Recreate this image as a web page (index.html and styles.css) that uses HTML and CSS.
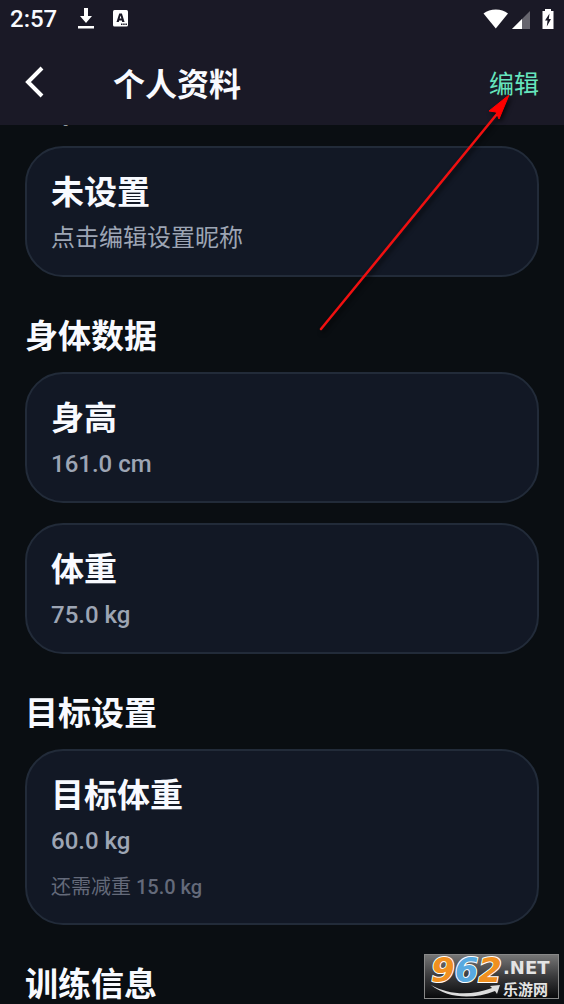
FILE: index.html
```html
<!DOCTYPE html>
<html lang="zh-CN">
<head>
<meta charset="utf-8">
<meta name="viewport" content="width=device-width, initial-scale=1">
<title>个人资料</title>
<link rel="stylesheet" href="styles.css">
</head>
<body>
<div class="app">
  <header class="top">
    <div class="status">
      <time class="clock">2:57</time>
      <svg class="download" width="18" height="24" viewBox="0 0 18 24" aria-hidden="true"><path d="M7 1h4v8h4l-6 7-6-7h4zM1 19h16v2.500H1z" fill="#fff"/></svg>
      <svg width="16" height="18" viewBox="0 0 16 18" aria-hidden="true"><rect x="0" y="0" width="15" height="16.500" rx="1.500" fill="#fff"/><path d="M3.500 12 6.200 3.500h2.700l2.700 8.500H9.200l-.4-1.500H6.200L5.800 12zM6.700 8.500h1.700L7.500 5.500z" fill="#1a1926" fill-rule="evenodd"/><path d="M8 14.300h6" stroke="#1a1926" stroke-width="1.500" stroke-dasharray="1.500 .7"/></svg>
      <div class="signals">
        <svg width="26" height="20" viewBox="0 0 26 20" aria-hidden="true"><path d="M.5 4.500C4 1.800 8 .5 12.800.5S21.500 1.800 25 4.500L12.800 19.500z" fill="#fff"/></svg>
        <svg class="cell" width="18" height="18" viewBox="0 0 18 18" aria-hidden="true"><path d="M0 18 18 0v18z" fill="#66656e"/><path d="M0 18 10 8v10z" fill="#fff"/></svg>
        <svg class="battery" width="12" height="22" viewBox="0 0 12 22" aria-hidden="true"><path d="M3 1h6v2h2.500v18H.5V3H3z" fill="#fff"/><path d="M7.500 5.500 3 12.500h2.500L4.800 18.500 9 11H6.800z" fill="#1a1926"/></svg>
      </div>
    </div>
    <nav class="bar">
      <button class="back" type="button" aria-label="返回"><svg width="20" height="32" viewBox="0 0 20 32" aria-hidden="true"><path d="M17 2 3 16l14 14" fill="none" stroke="#fff" stroke-width="4"/></svg></button>
      <h1 class="title">个人资料</h1>
      <button class="edit" type="button">编辑</button>
    </nav>
  </header>
  <main class="content">
    <section>
      <h2 class="heading">昵称</h2>
      <div class="cards">
        <article class="card"><h3 class="name">未设置</h3><p class="value">点击编辑设置昵称</p></article>
      </div>
    </section>
    <section>
      <h2 class="heading">身体数据</h2>
      <div class="cards">
        <article class="card"><h3 class="name">身高</h3><p class="value metric">161.0 cm</p></article>
        <article class="card"><h3 class="name">体重</h3><p class="value metric">75.0 kg</p></article>
      </div>
    </section>
    <section>
      <h2 class="heading">目标设置</h2>
      <div class="cards">
        <article class="card"><h3 class="name">目标体重</h3><p class="value metric">60.0 kg</p><p class="note">还需减重 <span class="metric">15.0 kg</span></p></article>
      </div>
    </section>
    <section>
      <h2 class="heading">训练信息</h2>
    </section>
  </main>
  <svg class="arrow" width="200" height="245" viewBox="0 0 200 245" aria-hidden="true"><path d="M6 239 182 24" stroke="#f01010" stroke-width="2.500" stroke-linecap="round"/><path d="m194 5-20 16 7 1 3 7z" fill="#fe0000" stroke="#fe0000"/></svg>
  <svg class="brand" width="135" height="45" viewBox="0 0 135 45" role="img" aria-label="962.NET 乐游网">
    <defs><linearGradient id="plate" x1="0" y1="0" x2="0" y2="1"><stop offset="0" stop-color="#777"/><stop offset=".5" stop-color="#3a3a3c"/><stop offset="1" stop-color="#08090b"/></linearGradient></defs>
    <rect x=".5" y=".5" width="134" height="44" fill="url(#plate)" stroke="#888"/>
    <path d="M7 31C25 41 47 42 68 34l-2-2 10-1-3 9-2-3C48 46 23 44 7 31z" fill="#ddd"/>
    <text class="digits" x="7" y="28"><tspan fill="#f09020">9</tspan><tspan fill="#58a9df">6</tspan><tspan fill="#f09020">2</tspan></text>
    <text class="net" x="79" y="20">.NET</text>
    <text class="site" x="79" y="41">乐游网</text>
  </svg>
</div>
</body>
</html>
```
FILE: styles.css
```css
* { box-sizing: border-box; }
body {
  margin: 0;
  background: #0a0e12;
  color: #f8faff;
  font-family: Roboto, "Noto Sans CJK SC", sans-serif;
}
h1, h2, h3, p { margin: 0; }
button {
  padding: 0;
  border: 0;
  background: none;
  font-family: inherit;
}
svg { display: block; }
.app {
  position: relative;
  display: flex;
  flex-direction: column;
  height: 100vh;
  overflow: hidden;
}
.top {
  position: relative;
  z-index: 1;
  flex: none;
  background: #1a1926;
}
.status {
  display: flex;
  align-items: center;
  height: 38px;
  padding: 0 10px;
}
.clock {
  font-size: 24px;
  font-weight: 500;
}
.download { margin: 0 18px 0 20px; }
.signals {
  display: flex;
  align-items: center;
  margin-left: auto;
}
.cell { margin: 2px 12px 0 3px; }
.bar {
  display: flex;
  align-items: center;
  height: 87px;
  padding: 0 25px;
}
.back { margin-right: 68px; }
.title {
  font-size: 32px;
  font-weight: 700;
}
.edit {
  margin-left: auto;
  color: #66e5bd;
  font-size: 25px;
}
.content {
  flex: 1;
  min-height: 0;
  margin-top: -74px;
  padding: 0 25px;
}
.heading {
  padding: 36px 0 11px;
  font-size: 33px;
  font-weight: 700;
  line-height: 48px;
}
.cards {
  display: grid;
  gap: 20px;
}
.card {
  padding: 21px 24px 19px;
  border: 2px solid #222b39;
  border-radius: 38px;
  background: #121825;
}
.name {
  font-size: 33px;
  font-weight: 700;
  line-height: 47px;
}
.value {
  margin-top: 4px;
  color: #9da5b4;
  font-size: 24px;
  line-height: 36px;
}
.metric { font-weight: 500; }
.note {
  margin-top: 12px;
  color: #646a7a;
  font-size: 20px;
  line-height: 33px;
}
.arrow {
  position: absolute;
  z-index: 2;
  top: 90px;
  left: 315px;
  filter: drop-shadow(2px 3px 2px #000a);
}
.brand {
  position: absolute;
  right: 5px;
  bottom: 5px;
  overflow: visible;
}
.digits {
  font: italic bold 34px "DejaVu Sans", sans-serif;
  stroke: #fff;
  stroke-width: 2px;
  paint-order: stroke;
}
.net {
  fill: #e4e4e4;
  font: bold 18px "DejaVu Sans", sans-serif;
}
.site {
  fill: #e4e4e4;
  font: bold 15px "Noto Sans CJK SC", sans-serif;
}
```
